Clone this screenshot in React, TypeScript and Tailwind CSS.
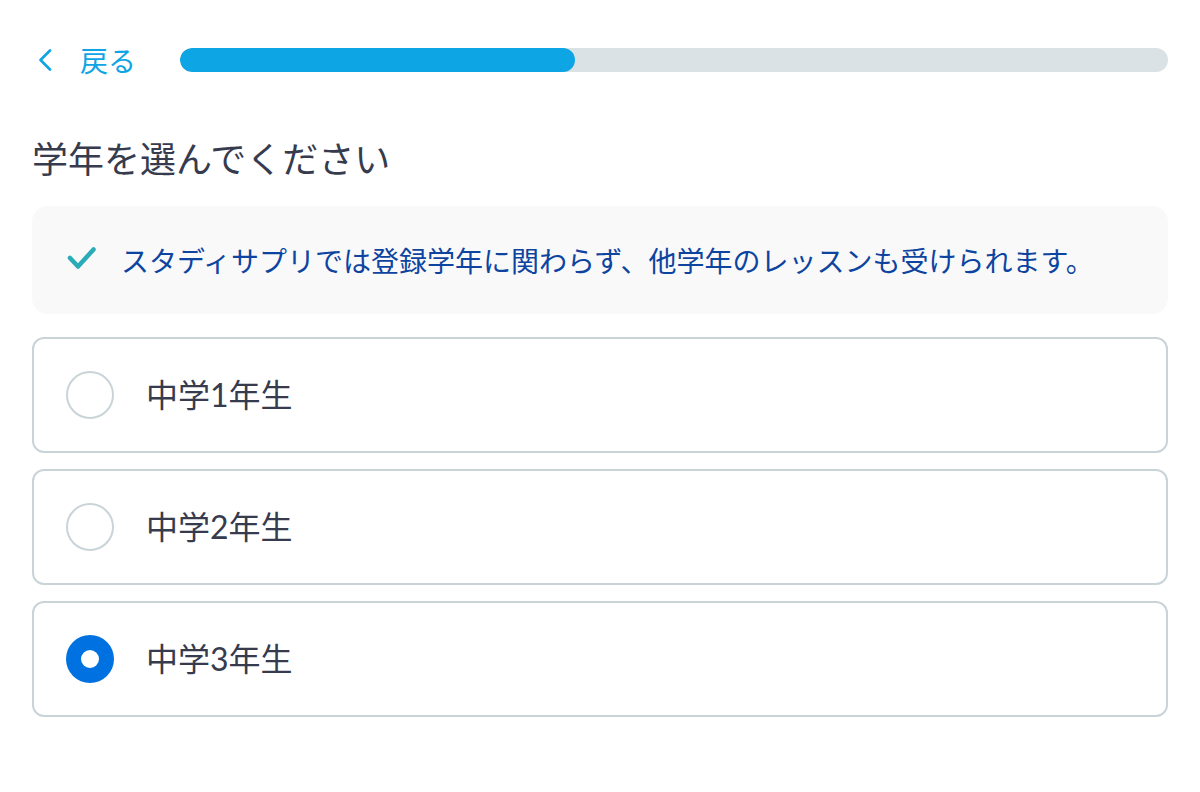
import React, { useState } from "react";

const grades = ["中学1年生", "中学2年生", "中学3年生"];

export default function App() {
  const [selected, setSelected] = useState(2);
  return (
    <div
      className="min-h-[792px] w-[1200px] bg-white px-8 pt-12"
      style={{ fontFamily: 'Lato, "Noto Sans CJK JP", sans-serif' }}
    >
      <div className="flex h-6 items-center">
        <button className="flex items-center text-[28px] leading-none text-[#0ea5e4]">
          <svg width="14" height="22" viewBox="0 0 14 22" className="ml-[6px] mr-[28px]" fill="none">
            <path d="M12 1.5 L2.5 11 L12 20.5" stroke="#0ea5e4" strokeWidth="2.6" strokeLinecap="round" strokeLinejoin="round" />
          </svg>
          <span style={{ fontFamily: '"Noto Sans CJK JP", sans-serif' }}>戻る</span>
        </button>
        <div className="ml-[44px] h-6 flex-1 overflow-hidden rounded-full bg-[#dbe2e6]">
          <div className="h-full w-[395px] rounded-full bg-[#0ea5e4]" />
        </div>
      </div>

      <h1
        className="mt-[58px] text-[36px] leading-[54px] text-[#363b4d]"
        style={{ fontFamily: '"Noto Sans CJK JP", sans-serif' }}
      >
        学年を選んでください
      </h1>

      <div className="mt-[22px] flex items-center rounded-[16px] bg-[#f9f9fa] px-8 py-[33px]">
        <svg width="32" height="32" viewBox="0 0 32 32" className="ml-[2px] mr-[23px]" fill="none">
          <path d="M4 14 L12 22.5 L27.5 5.5" stroke="#2aacb8" strokeWidth="4.5" strokeLinecap="round" strokeLinejoin="round" />
        </svg>
        <p
          className="text-[28px] leading-[42px] text-[#0d44a0]"
          style={{ fontFamily: '"Noto Sans CJK JP", sans-serif' }}
        >
          スタディサプリでは登録学年に関わらず、他学年のレッスンも受けられます。
        </p>
      </div>

      <div className="mt-[23px] flex flex-col gap-4">
        {grades.map((g, i) => (
          <button
            key={g}
            onClick={() => setSelected(i)}
            className="flex h-[116px] items-center rounded-[12px] border-2 border-[#c9d4d8] bg-white px-8 text-left"
          >
            {selected === i ? (
              <span className="flex h-12 w-12 items-center justify-center rounded-full bg-[#0071e0]">
                <span className="h-[18px] w-[18px] rounded-full bg-white" />
              </span>
            ) : (
              <span className="h-12 w-12 rounded-full border-2 border-[#c9d4d8] bg-white" />
            )}
            <span className="ml-8 text-[32px] leading-none text-[#363b4d]">{g}</span>
          </button>
        ))}
      </div>
    </div>
  );
}
